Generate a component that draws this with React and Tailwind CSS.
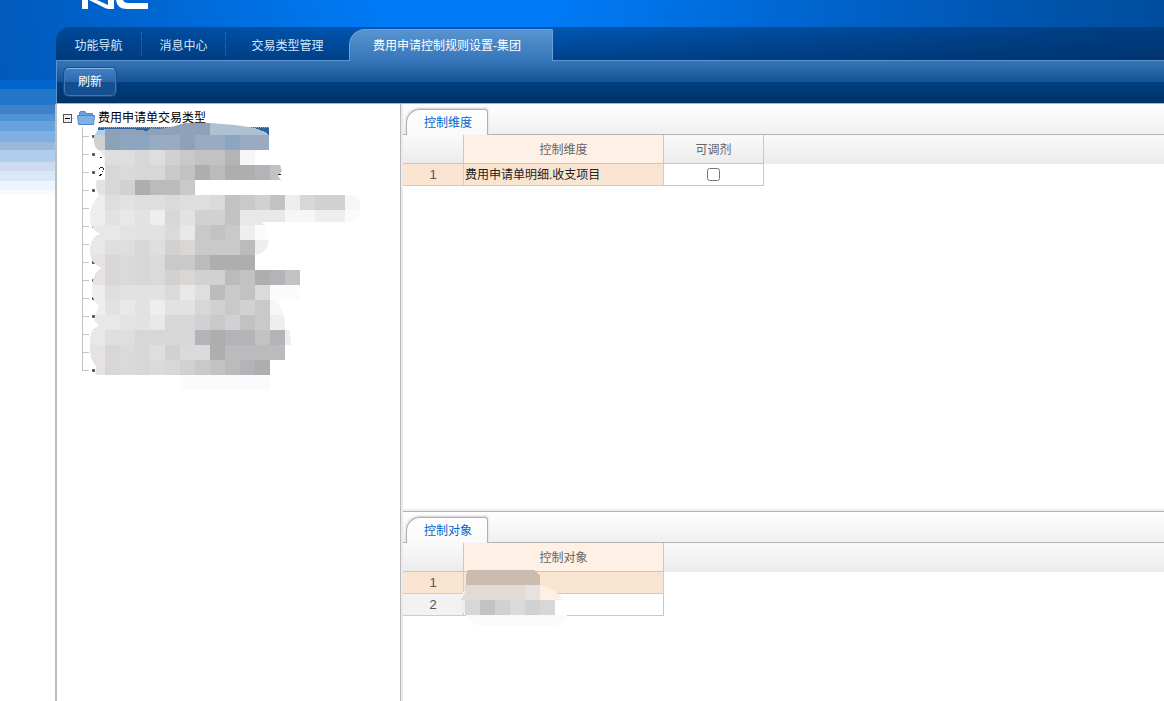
import { useState } from "react";

const navTabs = [
  { label: "功能导航", width: "w-[86px]" },
  { label: "消息中心", width: "w-[84px]" },
  { label: "交易类型管理", width: "w-[123px]" },
];

const CELL = 15;

const shades = {
  a: "#d7d7d7",
  b: "#dadada",
  c: "#dedede",
  d: "#e2e2e2",
  e: "#e8e8e8",
  f: "#eeeeee",
  g: "#cfd1d3",
  h: "#c9c9c9",
  i: "#c2c2c2",
  j: "#bbbbbb",
  k: "#aeaeae",
  l: "#b3b4b7",
  m: "#e6e2e2",
  n: "#dad6d3",
  o: "#fbfbfb",
  p: "#f6f6f6",
  q: "#d0d0d0",
  A: "#b0cdee",
  B: "#8ea1b6",
  C: "#8ba5c2",
  D: "#98abc2",
  E: "#afc0d3",
};

const maskRows = [
  "ABBBBBBBEEEE",
  "qBCCDDBDDCDD",
  "eccacghiilp",
  " abanhikjkkli",
  "magkjjh",
  "fcdccbccbihgifaggp",
  "fdedfadggieeeppffo",
  "eemddbehihfo",
  "eccacgnhhhjf",
  "mababhhjkkko",
  "mababgnggjikli",
  "fcdddbecjhiboo",
  "fdedfddaghghp",
  "eemdeaaghgihf",
  "eccaaaalkllilf",
  "mabacgbbkjjjj",
  "mababaghijlk",
  "      oooooo",
];

// Pixelated cover over the tree leaves
function LeafMask() {
  return (
    <svg
      className="pointer-events-none absolute left-8 top-4"
      width="270"
      height="270"
      shapeRendering="crispEdges"
      aria-hidden="true"
    >
      <clipPath id="leaf-mask">
        <path d="M8 10 L15 8 H60 Q72 10 85 6 L95 3 H120 L145 5 L165 8 L179 8 V30 H190 V45 L192 51 L188 56 L191 60 H180 V75 H262 Q270 78 270 84 V94 Q268 101 258 102 H172 Q180 112 178 125 Q175 134 165 135 V150 H210 V180 H185 Q196 190 195 210 H200 L201 225 H195 V240 H180 V270 H90 V255 H6 V246 Q-2 238 0 218 Q1 208 9 206 L4 200 L9 186 Q0 178 2 165 Q4 151 12 148 Q0 144 0 130 Q1 116 10 114 Q-1 108 0 95 Q1 82 9 75 Q4 68 7 60 Q13 54 14 46 L15 40 Q12 31 8 30 Q3 26 4 16 Z" />
      </clipPath>
      <g clipPath="url(#leaf-mask)">
        {maskRows.map((row, r) =>
          row.split("").map((shade, c) =>
            shade === " " ? null : (
              <rect key={`${r}-${c}`} x={c * CELL} y={r * CELL} width={CELL} height={CELL} fill={shades[shade]} />
            )
          )
        )}
      </g>
      <path d="M165 8 H179 V16 L175 12 Z M8 10 V8 H60 L58 11 L42 9 L20 9 Z" fill="#2f659f" />
      <path d="M9 48 h1 M10 47 h3 M13 48 v2 M12 51 v1 M10 54 h2 M9 55 h2 M188 54.5 h3 M10 37.5 h2" stroke="#222" fill="none" />
    </svg>
  );
}

function CellMask() {
  return (
    <svg
      className="pointer-events-none absolute -left-1 -top-1 z-10"
      width="108"
      height="60"
      shapeRendering="crispEdges"
      aria-hidden="true"
    >
      <path d="M5 17 H80 L100 28 L106 32 H95 V47 H107 Q104 57 92 58 H22 Q10 57 7 48 Q1 45 1 36 Q2 25 5 22 Z" fill="#fafafa" />
      <path d="M80 17 Q98 22 103 32 H80 Z" fill="#fff0e5" />
      <path d="M6 8 L8 2 H75 L80 8 V17 H6 Z" fill="#ccbcb0" />
      <path d="M5 17 H65 V32 H1 L5 24 Z" fill="#e3dad3" />
      <rect x="65" y="17" width="15" height="15" fill="#e5e2e2" />
      <rect x="1" y="32" width="4" height="13" fill="#eeeeee" />
      {["#d7d7d7", "#c2c2c2", "#cfd1d3", "#dadada", "#cfd1d3", "#d7d7d7"].map((fill, i) => (
        <rect key={i} x={5 + i * CELL} y="32" width={CELL} height={CELL} fill={fill} />
      ))}
    </svg>
  );
}

function Logo() {
  return (
    <svg width="68" height="9" viewBox="0 0 68 9" fill="white" aria-hidden="true">
      <rect x="1" y="0" width="6" height="9" />
      <path d="M8 0 H16 L27 5 V0 H33 V9 H28 Q25 9 22 7 Z" />
      <path d="M35 0 H42 Q43 3 47 3 H67 V9 H46 Q36 9 35 0 Z" />
    </svg>
  );
}

function FolderIcon() {
  return (
    <svg width="18" height="14" viewBox="0 0 18 14" aria-hidden="true">
      <path d="M2.5 4.5 V1.5 L3.5 0.5 H8 L9.5 2.5 H15.5 V4.5" fill="#6aa2de" stroke="#4a86c8" />
      <path d="M0.5 4.5 H17.5 L16.5 13.5 H1.5 Z" fill="#7fb0e4" stroke="#4a86c8" />
    </svg>
  );
}

function Tree() {
  const [open, setOpen] = useState(true);

  return (
    <aside className="w-[344px] shrink-0 border-r border-[#b9b9b9] bg-white pt-[5px]">
      <div className="flex h-[18px] items-center pl-1.5">
        <button
          type="button"
          aria-expanded={open}
          onClick={() => setOpen(!open)}
          className="flex size-[9px] items-center justify-center border border-[#555] bg-[#eee]"
        >
          <span className="h-px w-[5px] bg-black" />
        </button>
        <span className="mr-[3px] h-px w-0.5 bg-[#c4c4c4]" />
        <FolderIcon />
        <span className="ml-[3px] text-black">费用申请单交易类型</span>
      </div>
      {open && (
        <div className="relative">
          <ul className="pl-[25px]">
            {Array.from({ length: 14 }).map((_, i) => (
              <li key={i} className="group flex h-[18px] items-center">
                <span className="h-full w-px bg-[#c4c4c4] group-last:h-[10px] group-last:self-start" />
                <span className="h-px w-1.5 bg-[#c4c4c4]" />
                <span className="ml-[3px] size-[3px] rounded-[1px] bg-[#555]" />
                {i === 0 && (
                  <span className="ml-[3px] h-full w-[171px] border border-dotted border-[#e0a050] bg-[#2f659f]" />
                )}
              </li>
            ))}
          </ul>
          <div className="absolute left-px -top-[23px]">
            <LeafMask />
          </div>
        </div>
      )}
    </aside>
  );
}

function PaneTab({ children }) {
  return (
    <div className="flex h-[31px] items-end border-b border-[#b3b3b3] bg-linear-to-b from-white to-[#f0f0f0] pl-[3px]">
      <button
        type="button"
        className="-mb-px h-[26px] w-[82px] rounded-tl-[14px] rounded-tr-[3px] border border-b-0 border-[#b0b0b0] bg-linear-to-b from-white to-[#f9f9f9] pl-0.5 text-[#0066cc] shadow-[0_-1px_2px_#cccccc]"
      >
        {children}
      </button>
    </div>
  );
}

function HeadCell({ active, children }) {
  return (
    <th
      className={`h-[29px] border-b border-r border-[#c8c8c8] px-0 pb-0 pt-0.5 font-normal text-[#666] ${active ? "bg-[#fff0e5]" : ""}`}
    >
      {children}
    </th>
  );
}

function RowNumber({ active, children }) {
  return (
    <td
      className={`h-[22px] border-b border-r border-[#cccccc] p-0 text-center text-[13px] leading-4 text-[#555] ${active ? "bg-[#f9e4d2]" : "bg-[#f2f2f2]"}`}
    >
      {children}
    </td>
  );
}

const gridWrap =
  "bg-[linear-gradient(to_bottom,#fafafa,#ebebeb)] bg-[length:100%_29px] bg-no-repeat";

function DimensionPane() {
  return (
    <section className="flex-[15_1_0] bg-white">
      <PaneTab>控制维度</PaneTab>
      <div className={gridWrap}>
        <table className="w-[361px] table-fixed border-separate border-spacing-0">
          <colgroup>
            <col className="w-[61px]" />
            <col className="w-[200px]" />
            <col className="w-[100px]" />
          </colgroup>
          <thead>
            <tr>
              <HeadCell />
              <HeadCell active>控制维度</HeadCell>
              <HeadCell>可调剂</HeadCell>
            </tr>
          </thead>
          <tbody>
            <tr>
              <RowNumber active>1</RowNumber>
              <td id="dim-1" className="border-b border-r border-[#cccccc] bg-[#f9e4d2] px-px py-0 text-[#222]">
                费用申请单明细.收支项目
              </td>
              <td className="border-b border-r border-[#c8c8c8] p-0">
                <input type="checkbox" aria-labelledby="dim-1" className="mx-auto block size-[13px]" />
              </td>
            </tr>
          </tbody>
        </table>
      </div>
    </section>
  );
}

function TargetPane() {
  return (
    <section className="flex-[7_1_0] bg-white">
      <PaneTab>控制对象</PaneTab>
      <div className={gridWrap}>
        <table className="w-[261px] table-fixed border-separate border-spacing-0">
          <colgroup>
            <col className="w-[61px]" />
            <col className="w-[200px]" />
          </colgroup>
          <thead>
            <tr>
              <HeadCell />
              <HeadCell active>控制对象</HeadCell>
            </tr>
          </thead>
          <tbody>
            <tr>
              <RowNumber active>1</RowNumber>
              <td className="relative border-b border-r border-[#cccccc] bg-[#f9e4d2] p-0">
                <CellMask />
              </td>
            </tr>
            <tr>
              <RowNumber>2</RowNumber>
              <td className="border-b border-r border-[#c8c8c8] p-0" />
            </tr>
          </tbody>
        </table>
      </div>
    </section>
  );
}

export default function App() {
  return (
    <div className="flex min-h-screen flex-col bg-white bg-[linear-gradient(to_bottom,transparent_80px,#0064cc_80px_89px,#2176ca_89px_105px,#4080c4_105px_114px,#4f94d6_114px_121px,#68a2dd_121px_131px,#7eb0e3_131px_142px,#9bb8d8_142px_150px,#b0cdee_150px_162px,#ccdcee_162px_171px,#d8e8f7_171px_181px,#ecf4fd_181px_190px,#f7fbff_190px_195px,white_195px),radial-gradient(circle_720px_at_470px_-30px,#007cfa_0,#007af5_100px,#0060c6_400px,#0052a8_600px,#004c9c_720px)] font-['Liberation_Sans','Noto_Sans_CJK_SC',sans-serif] text-[12px] leading-[18px]">
      <header className="h-[27px] pl-[81px]">
        <Logo />
      </header>

      <div className="flex flex-1 flex-col pl-14">
        <nav className="flex h-[33px] items-end rounded-tl-[14px] bg-linear-to-b from-[#00285a]/42 to-[#00285a]/68">
          {navTabs.map((tab, i) => (
            <button
              key={tab.label}
              type="button"
              className={`flex h-full items-center justify-center pt-1 text-[#d5e8fa] ${tab.width}`}
            >
              <span className="flex-1">{tab.label}</span>
              {i < 2 && <span className="-mt-1 h-6 border-l border-dotted border-[#2d74bf]" />}
            </button>
          ))}
          <button
            type="button"
            className="z-10 -mb-px h-8 w-[204px] rounded-tl-[16px] rounded-tr-[2px] border border-b-0 border-[#6aa3dc] bg-linear-to-b from-[#5894d0] to-[#3575b9] pl-[23px] text-left text-white"
          >
            费用申请控制规则设置-集团
          </button>
        </nav>

        <div className="flex h-11 items-start border border-r-0 border-b-[#b3b3b3] border-l-[#5a92cc] border-t-[#5a92cc] bg-[linear-gradient(to_bottom,#3575b9,#145394_50%,#003f80_50%,#003369)] pl-[7px] pt-[7px]">
          <button
            type="button"
            className="h-7 w-[52px] rounded-[5px] border border-[#3d77b5] border-t-[#8db4dc] bg-[linear-gradient(to_bottom,#3f80c6,#2f68a8_50%,#124f92_50%,#154f90)] text-white shadow-[0_0_0_1px_#1c4d82]"
          >
            刷新
          </button>
        </div>

        <div className="-ml-px flex flex-1 border-l-2 border-[#bdbdbd] bg-white">
          <Tree />
          <main className="flex min-w-0 flex-1 flex-col border-l-2 border-[#ebebeb]">
            <DimensionPane />
            <div className="h-[3px] border-b border-[#b3b3b3] bg-[#ededed]" />
            <TargetPane />
          </main>
        </div>
      </div>
    </div>
  );
}
